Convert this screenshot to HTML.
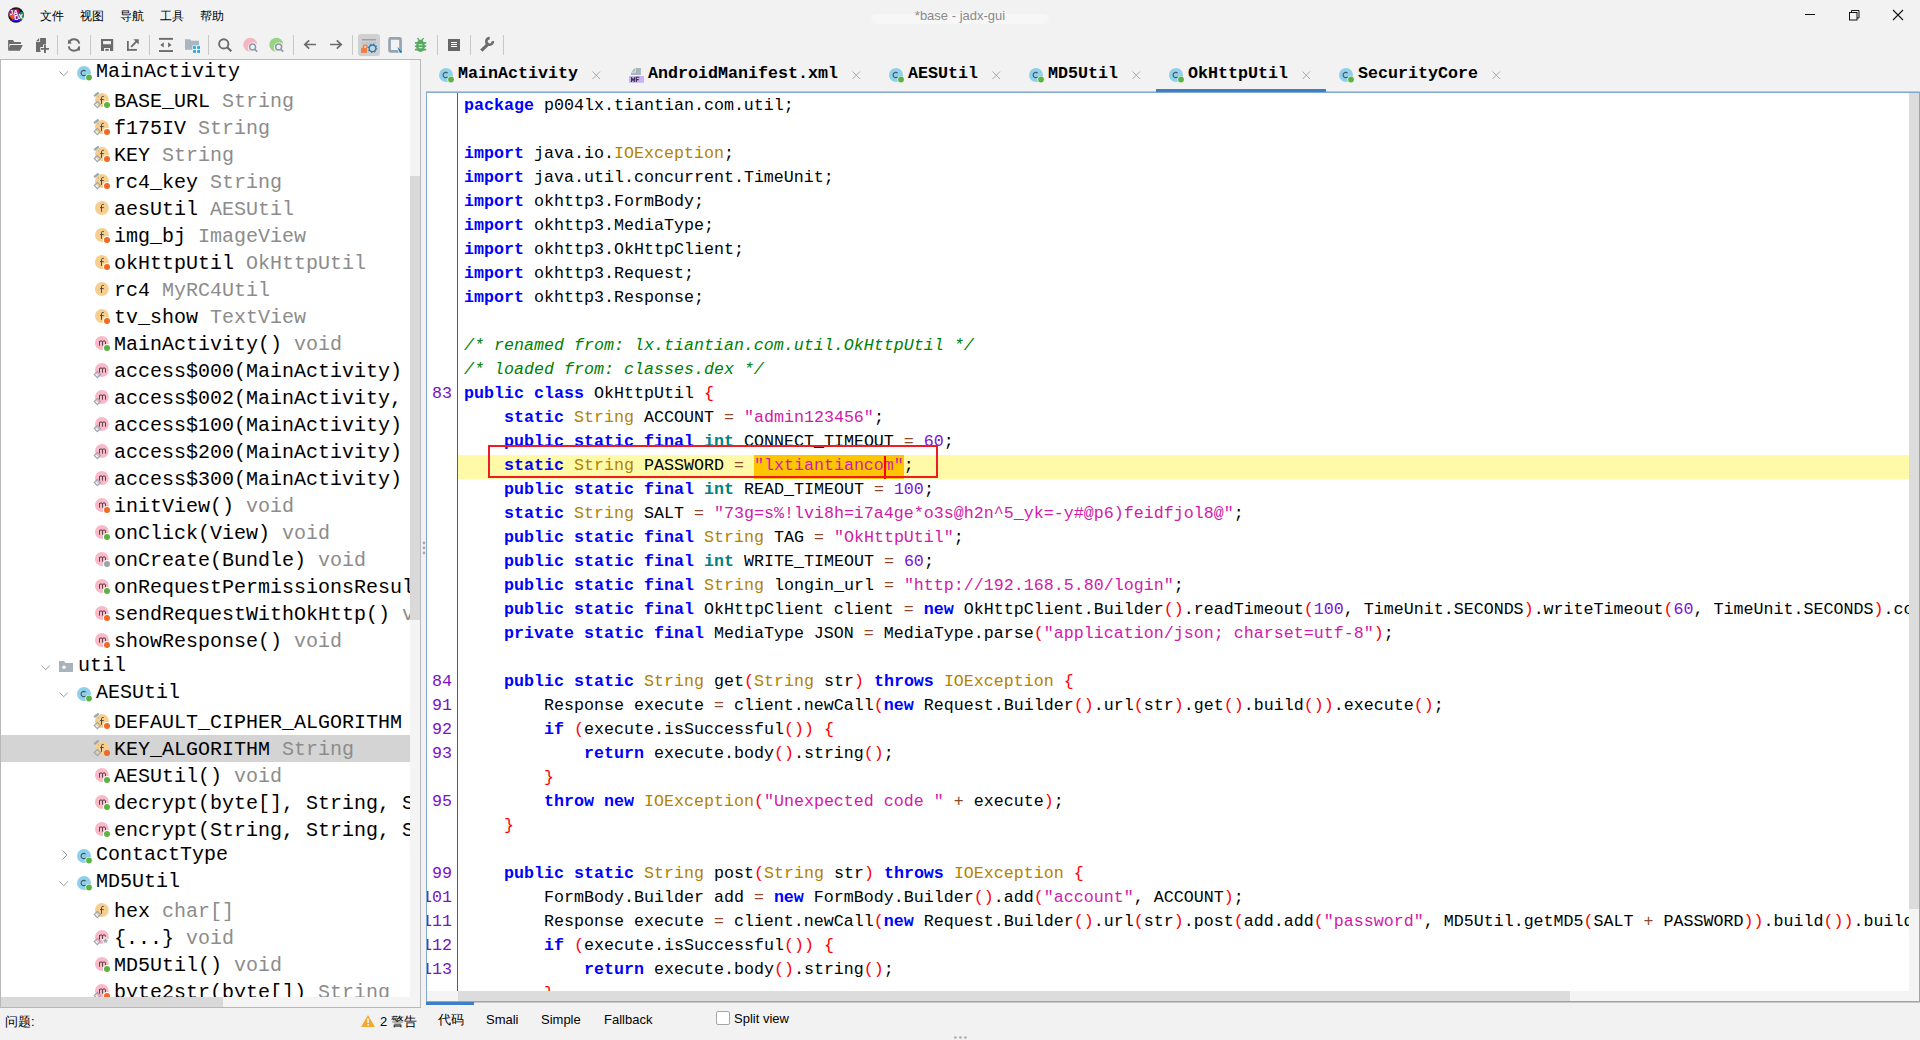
<!DOCTYPE html><html><head><meta charset="utf-8"><title>jadx-gui</title><style>
*{margin:0;padding:0;box-sizing:border-box}
html,body{width:1920px;height:1040px;overflow:hidden;background:#f2f2f2;font-family:"Liberation Sans",sans-serif;position:relative}
.a{position:absolute}
.ic{position:absolute;overflow:visible}
#tree{position:absolute;left:0;top:59px;width:421px;height:949px;border:1px solid #b8b8b8;background:#fff;overflow:hidden}
#treein{position:absolute;left:-1px;top:-60px;width:411px;height:997px;overflow:hidden}
.tt{position:absolute;white-space:pre;font-family:"Liberation Mono",monospace;font-size:20px;line-height:20px;color:#000}
.tg{color:#8c8c8c}
.sel{position:absolute;left:1px;width:410px;height:27px;background:#d4d4d4}
#code{position:absolute;left:426px;top:92px;width:1494px;height:910px;border:1px solid #82a9d2;background:#fff;overflow:hidden}
.cl,.ln{position:absolute;left:464px;white-space:pre;font-family:"Liberation Mono",monospace;font-size:16.664px;line-height:24px;height:24px;color:#000}
.ln{left:392px;color:#7a12c6;text-align:right;width:60px}
.kw{color:#0000ff;font-weight:bold}
.ti{color:#008080;font-weight:bold}
.ty{color:#b38200}
.st{color:#d21aa8}
.nu{color:#7a12d6}
.br{color:#ff0000}
.op{color:#8b4a2b}
.cm{color:#008000;font-style:italic}
.tab{position:absolute;top:64px;font-family:"Liberation Mono",monospace;font-weight:bold;font-size:16.664px;line-height:20px;color:#000;white-space:pre}
.x{position:absolute;top:71px}
.ui{position:absolute;white-space:pre;font-size:13px;line-height:16px;color:#000}
.sep{position:absolute;top:35px;width:1px;height:20px;background:#c8c8c8}
</style></head><body>
<svg class="ic" style="left:8px;top:7px" width="16" height="16" viewBox="0 0 16 16">
<defs><clipPath id="lc"><circle cx="8" cy="8" r="7.85"/></clipPath></defs>
<g clip-path="url(#lc)">
<rect width="16" height="16" fill="#1c1418"/>
<path d="M0.5 2.5 L10.5 1.8 L12 5.2 L10 8 H0.5 Z" fill="#a3126e"/>
<path d="M0.5 8 H11 L5.2 13.6 Z" fill="#f5561c"/>
<path d="M3.2 14 H13.2 L9.6 8.4 Z" fill="#3b10d2"/>
<path d="M10 8.3 L12 5 L16 5.3 V12 L13.2 14 Z" fill="#0e8a7a"/>
</g>
<text x="1.6" y="7.6" font-family="Liberation Sans" font-weight="bold" font-size="6.6" fill="#fff">JA</text>
<text x="6.3" y="13.4" font-family="Liberation Sans" font-weight="bold" font-size="6.6" fill="#fff">D</text>
<text x="10.6" y="12.2" font-family="Liberation Sans" font-weight="bold" font-size="6.6" fill="#fff">X</text>
</svg>
<div class="ui" style="left:40px;top:8px;font-size:12px">文件</div>
<div class="ui" style="left:80px;top:8px;font-size:12px">视图</div>
<div class="ui" style="left:120px;top:8px;font-size:12px">导航</div>
<div class="ui" style="left:160px;top:8px;font-size:12px">工具</div>
<div class="ui" style="left:200px;top:8px;font-size:12px">帮助</div>
<div class="a" style="left:871px;top:14px;width:178px;height:10px;border-radius:5px;background:#f7f7f7"></div>
<div class="ui" style="left:0;width:1920px;text-align:center;top:8px;color:#8a8a8a;font-size:13px">*base - jadx-gui</div>
<svg class="ic" style="left:1800px;top:5px" width="110" height="22" viewBox="0 0 110 22"><path d="M5 9.5 H15" stroke="#111" stroke-width="1"/><rect x="49.5" y="7.5" width="7.5" height="7.5" fill="none" stroke="#111" stroke-width="1"/><path d="M51.5 7.5 V5.5 H59 V13 H57" fill="none" stroke="#111" stroke-width="1"/><path d="M93 5 L103 15 M103 5 L93 15" stroke="#111" stroke-width="1.1"/></svg>
<svg class="ic" style="left:7px;top:39px" width="17" height="13" viewBox="0 0 17 13"><path d="M1.1 1.1 H6.1 L7.1 3 H13.9 V4.9 H2.4 V9.2 L1.1 11.5 Z" fill="#6b6b6b"/><path d="M3.3 6.1 H15.8 L12.9 11.75 H1.1 Z" fill="#6b6b6b"/></svg><svg class="ic" style="left:35px;top:37px" width="16" height="17" viewBox="0 0 16 17"><path d="M1 4.2 L4.2 0.9 V4.2 Z" fill="#6b6b6b"/><path d="M1 5.1 H5.1 V0.9 H11 V8 H8.2 V10.3 H5.6 V15 H1 Z" fill="#6b6b6b"/><path d="M5.4 11.9 H14.5 M9.95 7.6 V16.4" stroke="#f2f2f2" stroke-width="3.6"/><path d="M5.9 11.9 H14 M9.95 8.1 V15.9" stroke="#6b6b6b" stroke-width="1.9"/></svg><div class="sep" style="left:57px"></div><svg class="ic" style="left:67px;top:38px" width="14" height="14" viewBox="0 0 14 14"><path d="M1.7 5.6 A5.4 5.4 0 0 1 12.3 5.6" fill="none" stroke="#6b6b6b" stroke-width="1.9"/><path d="M1.7 8.4 A5.4 5.4 0 0 0 12.3 8.4" fill="none" stroke="#6b6b6b" stroke-width="1.9"/><path d="M1.1 1.5 V5.6 H4.9 Z" fill="#6b6b6b"/><path d="M13 8.4 V12.4 H9.25 Z" fill="#6b6b6b"/></svg><div class="sep" style="left:90px"></div><svg class="ic" style="left:101px;top:39px" width="13" height="13" viewBox="0 0 13 13"><path d="M0 0 H12.2 V11.9 H0 Z M2.1 2.1 V5.3 H10 V2.1 Z M3 8.9 V11.9 H9 V8.9 Z" fill="#6b6b6b" fill-rule="evenodd"/><rect x="4.3" y="9.9" width="3.45" height="1.9" fill="#6b6b6b"/></svg><svg class="ic" style="left:127px;top:39px" width="13" height="13" viewBox="0 0 13 13"><rect x="0" y="2" width="1.75" height="9.8" fill="#6b6b6b"/><rect x="0" y="9.95" width="9.9" height="1.85" fill="#6b6b6b"/><path d="M4.2 7.8 L9.8 2.2" stroke="#6b6b6b" stroke-width="1.9"/><path d="M6.4 0.2 H11.75 V5.5 Z" fill="#6b6b6b"/></svg><div class="sep" style="left:149px"></div><svg class="ic" style="left:159px;top:37px" width="15" height="16" viewBox="0 0 15 16"><rect x="0" y="0.9" width="14" height="1.9" fill="#6b6b6b"/><rect x="0" y="13.1" width="14" height="1.9" fill="#6b6b6b"/><path d="M1.3 8 L4.75 5.3 V10.6 Z M12.6 8 L9.1 5.3 V10.6 Z" fill="#6b6b6b"/></svg><svg class="ic" style="left:185px;top:39px" width="16" height="15" viewBox="0 0 16 15"><path d="M0 0.2 H5 L6.5 1.8 H14 V10.8 H0 Z" fill="#a9b5bf"/><rect x="7.4" y="6.4" width="8.6" height="8.6" fill="#f2f2f2"/><rect x="8.1" y="7.1" width="2.8" height="2.8" fill="#2aa5de"/><rect x="12.2" y="7.1" width="2.8" height="2.8" fill="#2aa5de"/><rect x="8.1" y="11.1" width="2.8" height="2.8" fill="#2aa5de"/><rect x="12.2" y="11.1" width="2.8" height="2.8" fill="#2aa5de"/></svg><div class="sep" style="left:208px"></div><svg class="ic" style="left:218px;top:39px" width="15" height="14" viewBox="0 0 15 14"><circle cx="5.75" cy="4.9" r="4.65" fill="none" stroke="#6b6b6b" stroke-width="1.9"/><path d="M9.1 8.3 L13.3 12.3" stroke="#6b6b6b" stroke-width="2.2"/></svg><svg class="ic" style="left:243px;top:37px" width="16" height="16" viewBox="0 0 16 16"><circle cx="7.3" cy="7.7" r="7" fill="#f7b4c3"/><circle cx="10" cy="10.5" r="5.2" fill="#f2f2f2"/><circle cx="9.6" cy="10" r="3" fill="none" stroke="#8a98a4" stroke-width="1.5"/><path d="M11.7 12.3 L14.3 14.7" stroke="#8a98a4" stroke-width="1.6"/></svg><svg class="ic" style="left:269px;top:37px" width="16" height="16" viewBox="0 0 16 16"><circle cx="7.3" cy="7.7" r="7" fill="#9ad283"/><circle cx="10" cy="10.5" r="5.2" fill="#f2f2f2"/><circle cx="9.6" cy="10" r="3" fill="none" stroke="#8a98a4" stroke-width="1.5"/><path d="M11.7 12.3 L14.3 14.7" stroke="#8a98a4" stroke-width="1.6"/></svg><div class="sep" style="left:293px"></div><svg class="ic" style="left:303px;top:39px" width="14" height="11" viewBox="0 0 14 11"><path d="M13 5.5 H1.8 M6.2 1.3 L1.8 5.5 L6.2 9.7" fill="none" stroke="#6b6b6b" stroke-width="1.7"/></svg><svg class="ic" style="left:329px;top:39px" width="14" height="11" viewBox="0 0 14 11"><path d="M1 5.5 H12.2 M7.8 1.3 L12.2 5.5 L7.8 9.7" fill="none" stroke="#6b6b6b" stroke-width="1.7"/></svg><div class="sep" style="left:352px"></div><div class="a" style="left:358px;top:34px;width:22px;height:22px;border-radius:3px;background:#d0d0d0"></div><svg class="ic" style="left:361px;top:38px" width="17" height="16" viewBox="0 0 17 16"><rect x="1.1" y="1" width="13.8" height="1.5" fill="#97a4ae"/><path d="M1.1 4 H2.6 V5.7 H1.1 Z M4.6 4 H7 V5.7 H4.6 Z M7.6 4 H9 V5.7 H7.6 Z M9.8 4 H11.2 V5.7 H9.8 Z M12 4 H14.9 V5.7 H12 Z" fill="#b9c2c9"/><path d="M2.3 10 V8.8 A1.9 1.9 0 0 1 6.1 8.8 V10" fill="none" stroke="#ee7f42" stroke-width="1.4"/><rect x="0.1" y="9.9" width="5.9" height="5" fill="#ee7f42"/><circle cx="11.5" cy="10.3" r="3.3" fill="none" stroke="#2a7fb5" stroke-width="1.3"/><circle cx="11.5" cy="10.3" r="4.1" fill="none" stroke="#2a7fb5" stroke-width="1.4" stroke-dasharray="1.3 1.92"/></svg><svg class="ic" style="left:388px;top:37px" width="16" height="17" viewBox="0 0 16 17"><rect x="1.55" y="1.45" width="11" height="13" rx="1" fill="none" stroke="#95a4b0" stroke-width="2.7"/><path d="M8.6 9.3 L14.8 14.5 V16.8 H11.2 Z" fill="#f2f2f2"/><path d="M9.3 10 L13.9 13.9 V15.8 H11.8 Z" fill="#1f77b0"/></svg><svg class="ic" style="left:414px;top:37px" width="14" height="16" viewBox="0 0 14 16"><path d="M3.4 1.1 L5.6 3.6 M9.6 1.1 L7.4 3.6" stroke="#58aa60" stroke-width="1.4"/><ellipse cx="6.5" cy="4.4" rx="2.9" ry="1.7" fill="#58aa60"/><ellipse cx="6.5" cy="9.3" rx="4.4" ry="5.6" fill="#58aa60"/><path d="M0.9 5.9 H12.2 M0.9 9.25 H12.2 M0.9 12.6 H12.2" stroke="#58aa60" stroke-width="1.6"/><rect x="4.6" y="7.3" width="3.8" height="1" fill="#e8f0e8"/><rect x="4.6" y="10.2" width="3.8" height="1" fill="#e8f0e8"/></svg><div class="sep" style="left:437px"></div><svg class="ic" style="left:448px;top:39px" width="12" height="12" viewBox="0 0 12 12"><rect width="12" height="12" fill="#666"/><path d="M3 3.5 H9 M3 5.5 H9 M3 7.5 H9" stroke="#fff" stroke-width="1"/></svg><div class="sep" style="left:470px"></div><svg class="ic" style="left:480px;top:37px" width="15" height="16" viewBox="0 0 15 16"><path d="M1.3 13.7 L7.6 7.6" stroke="#6b6b6b" stroke-width="3.2"/><path d="M12.9 4.2 A3.3 3.3 0 1 1 9.7 1.1" fill="none" stroke="#6b6b6b" stroke-width="2.6"/><path d="M6.7 5.6 L8.6 8.4" stroke="#6b6b6b" stroke-width="2.6"/></svg><div class="sep" style="left:503px"></div>
<div id="tree"><div id="treein">
<svg class="ic" style="left:59px;top:71.4px" width="10" height="6" viewBox="0 0 10 6"><path d="M0.5 0.5 L4.7 4.7 L8.9 0.5" fill="none" stroke="#9a9a9a" stroke-width="1"/></svg><svg class="ic" style="left:77px;top:66.2px" width="16" height="16" viewBox="0 0 16 16"><circle cx="7" cy="7" r="7" fill="#8fd0ea"/><path d="M8.6 5.2 A2.6 2.6 0 1 0 8.6 8.8" fill="none" stroke="#4a5560" stroke-width="1.1"/><circle cx="12" cy="11.5" r="3.6" fill="#fff"/><circle cx="12" cy="11.5" r="2.9" fill="#59b441"/></svg><div class="tt" style="left:96px;top:62.3px">MainActivity</div><svg class="ic" style="left:93px;top:91.9px" width="19" height="19" viewBox="0 0 19 19"><circle cx="8.9" cy="8" r="6.9" fill="#f6cf90"/><path d="M8.5 11.85 V5.8 Q8.5 4.4 9.8 4.4 H10.8 M7 7.6 H10.8" fill="none" stroke="#4d4538" stroke-width="0.95"/><path d="M1.8 3.6 L4.9 1.1" stroke="#9aa8b4" stroke-width="2.3" stroke-linecap="round"/><circle cx="5.5" cy="4.85" r="0.6" fill="#9aa8b4"/><path d="M4.4 9.4 L7.5 12.5 L4.4 15.6 L1.3 12.5 Z" fill="none" stroke="#9aa8b4" stroke-width="1.2"/><circle cx="14" cy="13.1" r="4" fill="#fff"/><circle cx="14" cy="13.1" r="3" fill="#59b441"/></svg><div class="tt" style="left:114px;top:92.1px">BASE_URL <span class="tg">String</span></div><svg class="ic" style="left:93px;top:118.9px" width="19" height="19" viewBox="0 0 19 19"><circle cx="8.9" cy="8" r="6.9" fill="#f6cf90"/><path d="M8.5 11.85 V5.8 Q8.5 4.4 9.8 4.4 H10.8 M7 7.6 H10.8" fill="none" stroke="#4d4538" stroke-width="0.95"/><path d="M1.8 3.6 L4.9 1.1" stroke="#9aa8b4" stroke-width="2.3" stroke-linecap="round"/><circle cx="5.5" cy="4.85" r="0.6" fill="#9aa8b4"/><path d="M4.4 9.4 L7.5 12.5 L4.4 15.6 L1.3 12.5 Z" fill="none" stroke="#9aa8b4" stroke-width="1.2"/><circle cx="14" cy="13.1" r="4" fill="#fff"/><circle cx="14" cy="13.1" r="3" fill="#f06a25"/></svg><div class="tt" style="left:114px;top:119.1px">f175IV <span class="tg">String</span></div><svg class="ic" style="left:93px;top:145.9px" width="19" height="19" viewBox="0 0 19 19"><circle cx="8.9" cy="8" r="6.9" fill="#f6cf90"/><path d="M8.5 11.85 V5.8 Q8.5 4.4 9.8 4.4 H10.8 M7 7.6 H10.8" fill="none" stroke="#4d4538" stroke-width="0.95"/><path d="M1.8 3.6 L4.9 1.1" stroke="#9aa8b4" stroke-width="2.3" stroke-linecap="round"/><circle cx="5.5" cy="4.85" r="0.6" fill="#9aa8b4"/><path d="M4.4 9.4 L7.5 12.5 L4.4 15.6 L1.3 12.5 Z" fill="none" stroke="#9aa8b4" stroke-width="1.2"/><circle cx="14" cy="13.1" r="4" fill="#fff"/><circle cx="14" cy="13.1" r="3" fill="#f06a25"/></svg><div class="tt" style="left:114px;top:146.1px">KEY <span class="tg">String</span></div><svg class="ic" style="left:93px;top:172.9px" width="19" height="19" viewBox="0 0 19 19"><circle cx="8.9" cy="8" r="6.9" fill="#f6cf90"/><path d="M8.5 11.85 V5.8 Q8.5 4.4 9.8 4.4 H10.8 M7 7.6 H10.8" fill="none" stroke="#4d4538" stroke-width="0.95"/><path d="M1.8 3.6 L4.9 1.1" stroke="#9aa8b4" stroke-width="2.3" stroke-linecap="round"/><circle cx="5.5" cy="4.85" r="0.6" fill="#9aa8b4"/><path d="M4.4 9.4 L7.5 12.5 L4.4 15.6 L1.3 12.5 Z" fill="none" stroke="#9aa8b4" stroke-width="1.2"/><circle cx="14" cy="13.1" r="4" fill="#fff"/><circle cx="14" cy="13.1" r="3" fill="#f06a25"/></svg><div class="tt" style="left:114px;top:173.1px">rc4_key <span class="tg">String</span></div><svg class="ic" style="left:93px;top:199.9px" width="19" height="19" viewBox="0 0 19 19"><circle cx="8.9" cy="8" r="6.9" fill="#f6cf90"/><path d="M8.5 11.85 V5.8 Q8.5 4.4 9.8 4.4 H10.8 M7 7.6 H10.8" fill="none" stroke="#4d4538" stroke-width="0.95"/></svg><div class="tt" style="left:114px;top:200.1px">aesUtil <span class="tg">AESUtil</span></div><svg class="ic" style="left:93px;top:226.9px" width="19" height="19" viewBox="0 0 19 19"><circle cx="8.9" cy="8" r="6.9" fill="#f6cf90"/><path d="M8.5 11.85 V5.8 Q8.5 4.4 9.8 4.4 H10.8 M7 7.6 H10.8" fill="none" stroke="#4d4538" stroke-width="0.95"/><circle cx="14" cy="13.1" r="4" fill="#fff"/><circle cx="14" cy="13.1" r="3" fill="#f06a25"/></svg><div class="tt" style="left:114px;top:227.1px">img_bj <span class="tg">ImageView</span></div><svg class="ic" style="left:93px;top:253.9px" width="19" height="19" viewBox="0 0 19 19"><circle cx="8.9" cy="8" r="6.9" fill="#f6cf90"/><path d="M8.5 11.85 V5.8 Q8.5 4.4 9.8 4.4 H10.8 M7 7.6 H10.8" fill="none" stroke="#4d4538" stroke-width="0.95"/><circle cx="14" cy="13.1" r="4" fill="#fff"/><circle cx="14" cy="13.1" r="3" fill="#f06a25"/></svg><div class="tt" style="left:114px;top:254.1px">okHttpUtil <span class="tg">OkHttpUtil</span></div><svg class="ic" style="left:93px;top:280.9px" width="19" height="19" viewBox="0 0 19 19"><circle cx="8.9" cy="8" r="6.9" fill="#f6cf90"/><path d="M8.5 11.85 V5.8 Q8.5 4.4 9.8 4.4 H10.8 M7 7.6 H10.8" fill="none" stroke="#4d4538" stroke-width="0.95"/></svg><div class="tt" style="left:114px;top:281.1px">rc4 <span class="tg">MyRC4Util</span></div><svg class="ic" style="left:93px;top:307.9px" width="19" height="19" viewBox="0 0 19 19"><circle cx="8.9" cy="8" r="6.9" fill="#f6cf90"/><path d="M8.5 11.85 V5.8 Q8.5 4.4 9.8 4.4 H10.8 M7 7.6 H10.8" fill="none" stroke="#4d4538" stroke-width="0.95"/><circle cx="14" cy="13.1" r="4" fill="#fff"/><circle cx="14" cy="13.1" r="3" fill="#f06a25"/></svg><div class="tt" style="left:114px;top:308.1px">tv_show <span class="tg">TextView</span></div><svg class="ic" style="left:93px;top:334.9px" width="19" height="19" viewBox="0 0 19 19"><circle cx="8.9" cy="8" r="6.9" fill="#f9b9c9"/><path d="M6.5 10.7 V6.2 M6.5 7 Q6.5 5.9 8 5.9 Q9.5 5.9 9.5 7 V10.7 M9.5 7 Q9.5 5.9 11 5.9 Q12.5 5.9 12.5 7 V10.7" fill="none" stroke="#4d3d40" stroke-width="0.95"/><circle cx="14" cy="13.1" r="4" fill="#fff"/><circle cx="14" cy="13.1" r="3" fill="#59b441"/></svg><div class="tt" style="left:114px;top:335.1px">MainActivity() <span class="tg">void</span></div><svg class="ic" style="left:93px;top:361.9px" width="19" height="19" viewBox="0 0 19 19"><circle cx="8.9" cy="8" r="6.9" fill="#f9b9c9"/><path d="M6.5 10.7 V6.2 M6.5 7 Q6.5 5.9 8 5.9 Q9.5 5.9 9.5 7 V10.7 M9.5 7 Q9.5 5.9 11 5.9 Q12.5 5.9 12.5 7 V10.7" fill="none" stroke="#4d3d40" stroke-width="0.95"/><path d="M4.4 9.4 L7.5 12.5 L4.4 15.6 L1.3 12.5 Z" fill="none" stroke="#9aa8b4" stroke-width="1.2"/></svg><div class="tt" style="left:114px;top:362.1px">access$000(MainActivity)</div><svg class="ic" style="left:93px;top:388.9px" width="19" height="19" viewBox="0 0 19 19"><circle cx="8.9" cy="8" r="6.9" fill="#f9b9c9"/><path d="M6.5 10.7 V6.2 M6.5 7 Q6.5 5.9 8 5.9 Q9.5 5.9 9.5 7 V10.7 M9.5 7 Q9.5 5.9 11 5.9 Q12.5 5.9 12.5 7 V10.7" fill="none" stroke="#4d3d40" stroke-width="0.95"/><path d="M4.4 9.4 L7.5 12.5 L4.4 15.6 L1.3 12.5 Z" fill="none" stroke="#9aa8b4" stroke-width="1.2"/></svg><div class="tt" style="left:114px;top:389.1px">access$002(MainActivity, String)</div><svg class="ic" style="left:93px;top:415.9px" width="19" height="19" viewBox="0 0 19 19"><circle cx="8.9" cy="8" r="6.9" fill="#f9b9c9"/><path d="M6.5 10.7 V6.2 M6.5 7 Q6.5 5.9 8 5.9 Q9.5 5.9 9.5 7 V10.7 M9.5 7 Q9.5 5.9 11 5.9 Q12.5 5.9 12.5 7 V10.7" fill="none" stroke="#4d3d40" stroke-width="0.95"/><path d="M4.4 9.4 L7.5 12.5 L4.4 15.6 L1.3 12.5 Z" fill="none" stroke="#9aa8b4" stroke-width="1.2"/></svg><div class="tt" style="left:114px;top:416.1px">access$100(MainActivity)</div><svg class="ic" style="left:93px;top:442.9px" width="19" height="19" viewBox="0 0 19 19"><circle cx="8.9" cy="8" r="6.9" fill="#f9b9c9"/><path d="M6.5 10.7 V6.2 M6.5 7 Q6.5 5.9 8 5.9 Q9.5 5.9 9.5 7 V10.7 M9.5 7 Q9.5 5.9 11 5.9 Q12.5 5.9 12.5 7 V10.7" fill="none" stroke="#4d3d40" stroke-width="0.95"/><path d="M4.4 9.4 L7.5 12.5 L4.4 15.6 L1.3 12.5 Z" fill="none" stroke="#9aa8b4" stroke-width="1.2"/></svg><div class="tt" style="left:114px;top:443.1px">access$200(MainActivity)</div><svg class="ic" style="left:93px;top:469.9px" width="19" height="19" viewBox="0 0 19 19"><circle cx="8.9" cy="8" r="6.9" fill="#f9b9c9"/><path d="M6.5 10.7 V6.2 M6.5 7 Q6.5 5.9 8 5.9 Q9.5 5.9 9.5 7 V10.7 M9.5 7 Q9.5 5.9 11 5.9 Q12.5 5.9 12.5 7 V10.7" fill="none" stroke="#4d3d40" stroke-width="0.95"/><path d="M4.4 9.4 L7.5 12.5 L4.4 15.6 L1.3 12.5 Z" fill="none" stroke="#9aa8b4" stroke-width="1.2"/></svg><div class="tt" style="left:114px;top:470.1px">access$300(MainActivity)</div><svg class="ic" style="left:93px;top:496.9px" width="19" height="19" viewBox="0 0 19 19"><circle cx="8.9" cy="8" r="6.9" fill="#f9b9c9"/><path d="M6.5 10.7 V6.2 M6.5 7 Q6.5 5.9 8 5.9 Q9.5 5.9 9.5 7 V10.7 M9.5 7 Q9.5 5.9 11 5.9 Q12.5 5.9 12.5 7 V10.7" fill="none" stroke="#4d3d40" stroke-width="0.95"/><circle cx="14" cy="13.1" r="4" fill="#fff"/><circle cx="14" cy="13.1" r="3" fill="#f06a25"/></svg><div class="tt" style="left:114px;top:497.1px">initView() <span class="tg">void</span></div><svg class="ic" style="left:93px;top:523.9px" width="19" height="19" viewBox="0 0 19 19"><circle cx="8.9" cy="8" r="6.9" fill="#f9b9c9"/><path d="M6.5 10.7 V6.2 M6.5 7 Q6.5 5.9 8 5.9 Q9.5 5.9 9.5 7 V10.7 M9.5 7 Q9.5 5.9 11 5.9 Q12.5 5.9 12.5 7 V10.7" fill="none" stroke="#4d3d40" stroke-width="0.95"/><circle cx="14" cy="13.1" r="4" fill="#fff"/><circle cx="14" cy="13.1" r="3" fill="#59b441"/></svg><div class="tt" style="left:114px;top:524.1px">onClick(View) <span class="tg">void</span></div><svg class="ic" style="left:93px;top:550.9px" width="19" height="19" viewBox="0 0 19 19"><circle cx="8.9" cy="8" r="6.9" fill="#f9b9c9"/><path d="M6.5 10.7 V6.2 M6.5 7 Q6.5 5.9 8 5.9 Q9.5 5.9 9.5 7 V10.7 M9.5 7 Q9.5 5.9 11 5.9 Q12.5 5.9 12.5 7 V10.7" fill="none" stroke="#4d3d40" stroke-width="0.95"/><circle cx="14" cy="13.1" r="4" fill="#fff"/><circle cx="14" cy="13.1" r="3" fill="#9aa4ac"/></svg><div class="tt" style="left:114px;top:551.1px">onCreate(Bundle) <span class="tg">void</span></div><svg class="ic" style="left:93px;top:577.9px" width="19" height="19" viewBox="0 0 19 19"><circle cx="8.9" cy="8" r="6.9" fill="#f9b9c9"/><path d="M6.5 10.7 V6.2 M6.5 7 Q6.5 5.9 8 5.9 Q9.5 5.9 9.5 7 V10.7 M9.5 7 Q9.5 5.9 11 5.9 Q12.5 5.9 12.5 7 V10.7" fill="none" stroke="#4d3d40" stroke-width="0.95"/><circle cx="14" cy="13.1" r="4" fill="#fff"/><circle cx="14" cy="13.1" r="3" fill="#59b441"/></svg><div class="tt" style="left:114px;top:578.1px">onRequestPermissionsResult(int, String[], int[]) <span class="tg">void</span></div><svg class="ic" style="left:93px;top:604.9px" width="19" height="19" viewBox="0 0 19 19"><circle cx="8.9" cy="8" r="6.9" fill="#f9b9c9"/><path d="M6.5 10.7 V6.2 M6.5 7 Q6.5 5.9 8 5.9 Q9.5 5.9 9.5 7 V10.7 M9.5 7 Q9.5 5.9 11 5.9 Q12.5 5.9 12.5 7 V10.7" fill="none" stroke="#4d3d40" stroke-width="0.95"/><circle cx="14" cy="13.1" r="4" fill="#fff"/><circle cx="14" cy="13.1" r="3" fill="#f06a25"/></svg><div class="tt" style="left:114px;top:605.1px">sendRequestWithOkHttp() <span class="tg">void</span></div><svg class="ic" style="left:93px;top:631.9px" width="19" height="19" viewBox="0 0 19 19"><circle cx="8.9" cy="8" r="6.9" fill="#f9b9c9"/><path d="M6.5 10.7 V6.2 M6.5 7 Q6.5 5.9 8 5.9 Q9.5 5.9 9.5 7 V10.7 M9.5 7 Q9.5 5.9 11 5.9 Q12.5 5.9 12.5 7 V10.7" fill="none" stroke="#4d3d40" stroke-width="0.95"/><circle cx="14" cy="13.1" r="4" fill="#fff"/><circle cx="14" cy="13.1" r="3" fill="#f06a25"/></svg><div class="tt" style="left:114px;top:632.1px">showResponse() <span class="tg">void</span></div><svg class="ic" style="left:41px;top:665.2px" width="10" height="6" viewBox="0 0 10 6"><path d="M0.5 0.5 L4.7 4.7 L8.9 0.5" fill="none" stroke="#9a9a9a" stroke-width="1"/></svg><svg class="ic" style="left:59px;top:661.2px" width="14" height="11" viewBox="0 0 14 11"><path d="M0 0 H5 L6.5 2 H14 V11 H0 Z" fill="#a9b3bb"/><circle cx="5" cy="6.3" r="1.8" fill="#fff"/></svg><div class="tt" style="left:78px;top:656.1px">util</div><svg class="ic" style="left:59px;top:692.2px" width="10" height="6" viewBox="0 0 10 6"><path d="M0.5 0.5 L4.7 4.7 L8.9 0.5" fill="none" stroke="#9a9a9a" stroke-width="1"/></svg><svg class="ic" style="left:77px;top:687px" width="16" height="16" viewBox="0 0 16 16"><circle cx="7" cy="7" r="7" fill="#8fd0ea"/><path d="M8.6 5.2 A2.6 2.6 0 1 0 8.6 8.8" fill="none" stroke="#4a5560" stroke-width="1.1"/><circle cx="12" cy="11.5" r="3.6" fill="#fff"/><circle cx="12" cy="11.5" r="2.9" fill="#59b441"/></svg><div class="tt" style="left:96px;top:683.1px">AESUtil</div><svg class="ic" style="left:93px;top:712.7px" width="19" height="19" viewBox="0 0 19 19"><circle cx="8.9" cy="8" r="6.9" fill="#f6cf90"/><path d="M8.5 11.85 V5.8 Q8.5 4.4 9.8 4.4 H10.8 M7 7.6 H10.8" fill="none" stroke="#4d4538" stroke-width="0.95"/><path d="M1.8 3.6 L4.9 1.1" stroke="#9aa8b4" stroke-width="2.3" stroke-linecap="round"/><circle cx="5.5" cy="4.85" r="0.6" fill="#9aa8b4"/><path d="M4.4 9.4 L7.5 12.5 L4.4 15.6 L1.3 12.5 Z" fill="none" stroke="#9aa8b4" stroke-width="1.2"/><circle cx="14" cy="13.1" r="4" fill="#fff"/><circle cx="14" cy="13.1" r="3" fill="#f06a25"/></svg><div class="tt" style="left:114px;top:712.9px">DEFAULT_CIPHER_ALGORITHM <span class="tg">String</span></div><div class="sel" style="top:735px"></div><svg class="ic" style="left:93px;top:739.7px" width="19" height="19" viewBox="0 0 19 19"><circle cx="8.9" cy="8" r="6.9" fill="#f6cf90"/><path d="M8.5 11.85 V5.8 Q8.5 4.4 9.8 4.4 H10.8 M7 7.6 H10.8" fill="none" stroke="#4d4538" stroke-width="0.95"/><path d="M1.8 3.6 L4.9 1.1" stroke="#9aa8b4" stroke-width="2.3" stroke-linecap="round"/><circle cx="5.5" cy="4.85" r="0.6" fill="#9aa8b4"/><path d="M4.4 9.4 L7.5 12.5 L4.4 15.6 L1.3 12.5 Z" fill="none" stroke="#9aa8b4" stroke-width="1.2"/><circle cx="14" cy="13.1" r="4" fill="#d4d4d4"/><circle cx="14" cy="13.1" r="3" fill="#f06a25"/></svg><div class="tt" style="left:114px;top:739.9px">KEY_ALGORITHM <span class="tg">String</span></div><svg class="ic" style="left:93px;top:766.7px" width="19" height="19" viewBox="0 0 19 19"><circle cx="8.9" cy="8" r="6.9" fill="#f9b9c9"/><path d="M6.5 10.7 V6.2 M6.5 7 Q6.5 5.9 8 5.9 Q9.5 5.9 9.5 7 V10.7 M9.5 7 Q9.5 5.9 11 5.9 Q12.5 5.9 12.5 7 V10.7" fill="none" stroke="#4d3d40" stroke-width="0.95"/><circle cx="14" cy="13.1" r="4" fill="#fff"/><circle cx="14" cy="13.1" r="3" fill="#59b441"/></svg><div class="tt" style="left:114px;top:766.9px">AESUtil() <span class="tg">void</span></div><svg class="ic" style="left:93px;top:793.7px" width="19" height="19" viewBox="0 0 19 19"><circle cx="8.9" cy="8" r="6.9" fill="#f9b9c9"/><path d="M6.5 10.7 V6.2 M6.5 7 Q6.5 5.9 8 5.9 Q9.5 5.9 9.5 7 V10.7 M9.5 7 Q9.5 5.9 11 5.9 Q12.5 5.9 12.5 7 V10.7" fill="none" stroke="#4d3d40" stroke-width="0.95"/><circle cx="14" cy="13.1" r="4" fill="#fff"/><circle cx="14" cy="13.1" r="3" fill="#59b441"/></svg><div class="tt" style="left:114px;top:793.9px">decrypt(byte[], String, String) <span class="tg">byte[]</span></div><svg class="ic" style="left:93px;top:820.7px" width="19" height="19" viewBox="0 0 19 19"><circle cx="8.9" cy="8" r="6.9" fill="#f9b9c9"/><path d="M6.5 10.7 V6.2 M6.5 7 Q6.5 5.9 8 5.9 Q9.5 5.9 9.5 7 V10.7 M9.5 7 Q9.5 5.9 11 5.9 Q12.5 5.9 12.5 7 V10.7" fill="none" stroke="#4d3d40" stroke-width="0.95"/><circle cx="14" cy="13.1" r="4" fill="#fff"/><circle cx="14" cy="13.1" r="3" fill="#59b441"/></svg><div class="tt" style="left:114px;top:820.9px">encrypt(String, String, String) <span class="tg">byte[]</span></div><svg class="ic" style="left:62px;top:849.5px" width="6" height="10" viewBox="0 0 6 10"><path d="M0.5 0.5 L5 5 L0.5 9.5" fill="none" stroke="#9a9a9a" stroke-width="1"/></svg><svg class="ic" style="left:77px;top:848.8px" width="16" height="16" viewBox="0 0 16 16"><circle cx="7" cy="7" r="7" fill="#8fd0ea"/><path d="M8.6 5.2 A2.6 2.6 0 1 0 8.6 8.8" fill="none" stroke="#4a5560" stroke-width="1.1"/><circle cx="12" cy="11.5" r="3.6" fill="#fff"/><circle cx="12" cy="11.5" r="2.9" fill="#59b441"/></svg><div class="tt" style="left:96px;top:844.9px">ContactType</div><svg class="ic" style="left:59px;top:881px" width="10" height="6" viewBox="0 0 10 6"><path d="M0.5 0.5 L4.7 4.7 L8.9 0.5" fill="none" stroke="#9a9a9a" stroke-width="1"/></svg><svg class="ic" style="left:77px;top:875.8px" width="16" height="16" viewBox="0 0 16 16"><circle cx="7" cy="7" r="7" fill="#8fd0ea"/><path d="M8.6 5.2 A2.6 2.6 0 1 0 8.6 8.8" fill="none" stroke="#4a5560" stroke-width="1.1"/><circle cx="12" cy="11.5" r="3.6" fill="#fff"/><circle cx="12" cy="11.5" r="2.9" fill="#59b441"/></svg><div class="tt" style="left:96px;top:871.9px">MD5Util</div><svg class="ic" style="left:93px;top:901.7px" width="19" height="19" viewBox="0 0 19 19"><circle cx="8.9" cy="8" r="6.9" fill="#f6cf90"/><path d="M8.5 11.85 V5.8 Q8.5 4.4 9.8 4.4 H10.8 M7 7.6 H10.8" fill="none" stroke="#4d4538" stroke-width="0.95"/><path d="M4.4 9.4 L7.5 12.5 L4.4 15.6 L1.3 12.5 Z" fill="none" stroke="#9aa8b4" stroke-width="1.2"/></svg><div class="tt" style="left:114px;top:901.9px">hex <span class="tg">char[]</span></div><svg class="ic" style="left:93px;top:928.7px" width="19" height="19" viewBox="0 0 19 19"><circle cx="8.9" cy="8" r="6.9" fill="#f9b9c9"/><path d="M6.5 10.7 V6.2 M6.5 7 Q6.5 5.9 8 5.9 Q9.5 5.9 9.5 7 V10.7 M9.5 7 Q9.5 5.9 11 5.9 Q12.5 5.9 12.5 7 V10.7" fill="none" stroke="#4d3d40" stroke-width="0.95"/><path d="M4.4 9.4 L7.5 12.5 L4.4 15.6 L1.3 12.5 Z" fill="none" stroke="#9aa8b4" stroke-width="1.2"/><path d="M12.50 7.80 L13.50 10.32 L16.21 10.49 L14.12 12.23 L14.79 14.86 L12.50 13.40 L10.21 14.86 L10.88 12.23 L8.79 10.49 L11.50 10.32 Z" fill="#9aa8b4" stroke="#fff" stroke-width="0.8"/></svg><div class="tt" style="left:114px;top:928.9px">{...} <span class="tg">void</span></div><svg class="ic" style="left:93px;top:955.7px" width="19" height="19" viewBox="0 0 19 19"><circle cx="8.9" cy="8" r="6.9" fill="#f9b9c9"/><path d="M6.5 10.7 V6.2 M6.5 7 Q6.5 5.9 8 5.9 Q9.5 5.9 9.5 7 V10.7 M9.5 7 Q9.5 5.9 11 5.9 Q12.5 5.9 12.5 7 V10.7" fill="none" stroke="#4d3d40" stroke-width="0.95"/><circle cx="14" cy="13.1" r="4" fill="#fff"/><circle cx="14" cy="13.1" r="3" fill="#59b441"/></svg><div class="tt" style="left:114px;top:955.9px">MD5Util() <span class="tg">void</span></div><svg class="ic" style="left:93px;top:982.7px" width="19" height="19" viewBox="0 0 19 19"><circle cx="8.9" cy="8" r="6.9" fill="#f9b9c9"/><path d="M6.5 10.7 V6.2 M6.5 7 Q6.5 5.9 8 5.9 Q9.5 5.9 9.5 7 V10.7 M9.5 7 Q9.5 5.9 11 5.9 Q12.5 5.9 12.5 7 V10.7" fill="none" stroke="#4d3d40" stroke-width="0.95"/><path d="M4.4 9.4 L7.5 12.5 L4.4 15.6 L1.3 12.5 Z" fill="none" stroke="#9aa8b4" stroke-width="1.2"/><circle cx="14" cy="13.1" r="4" fill="#fff"/><circle cx="14" cy="13.1" r="3" fill="#f06a25"/></svg><div class="tt" style="left:114px;top:982.9px">byte2str(byte[]) <span class="tg">String</span></div>
</div>
<div class="a" style="left:409px;top:0;width:10px;height:938px;background:#f4f4f4"></div>
<div class="a" style="left:409px;top:116px;width:10px;height:444px;background:#d9d9d9"></div>
<div class="a" style="left:0;top:937px;width:419px;height:10px;background:#f4f4f4"></div>
<div class="a" style="left:0;top:937px;width:222px;height:10px;background:#d9d9d9"></div>
</div>
<svg class="ic" style="left:421.5px;top:540.5px" width="4" height="14" viewBox="0 0 4 14"><circle cx="2" cy="2" r="1.4" fill="#ababab"/><circle cx="2" cy="7" r="1.4" fill="#ababab"/><circle cx="2" cy="12" r="1.4" fill="#ababab"/></svg>
<svg class="ic" style="left:439px;top:68px" width="16" height="16" viewBox="0 0 16 16"><circle cx="7" cy="7" r="7" fill="#8fd0ea"/><path d="M8.6 5.2 A2.6 2.6 0 1 0 8.6 8.8" fill="none" stroke="#4a5560" stroke-width="1.1"/><circle cx="12" cy="11.5" r="3.6" fill="#f2f2f2"/><circle cx="12" cy="11.5" r="2.9" fill="#59b441"/></svg>
<div class="tab" style="left:458px">MainActivity</div>
<svg class="ic" style="left:592px;top:71px" width="9" height="9" viewBox="0 0 9 9"><path d="M0.5 0.5 L8 8 M8 0.5 L0.5 8" stroke="#a8a8a8" stroke-width="1"/></svg>
<svg class="ic" style="left:629px;top:68px" width="16" height="15" viewBox="0 0 16 15"><path d="M2 4.5 H6.6 V0 H11.9 V6.9 H2 Z M2.5 3.7 L5.9 0 V3.7 Z" fill="#a9b4bc"/><rect x="0" y="8" width="15" height="6.8" fill="#c8b4f5"/><path d="M2.5 14 V9.3 L4.1 12.8 L5.7 9.3 V14 M7.4 14 V9.3 H10.3 M7.4 11.6 H9.8" fill="none" stroke="#3d3540" stroke-width="1.05"/></svg>
<div class="tab" style="left:648px">AndroidManifest.xml</div>
<svg class="ic" style="left:852px;top:71px" width="9" height="9" viewBox="0 0 9 9"><path d="M0.5 0.5 L8 8 M8 0.5 L0.5 8" stroke="#a8a8a8" stroke-width="1"/></svg>
<svg class="ic" style="left:889px;top:68px" width="16" height="16" viewBox="0 0 16 16"><circle cx="7" cy="7" r="7" fill="#8fd0ea"/><path d="M8.6 5.2 A2.6 2.6 0 1 0 8.6 8.8" fill="none" stroke="#4a5560" stroke-width="1.1"/><circle cx="12" cy="11.5" r="3.6" fill="#f2f2f2"/><circle cx="12" cy="11.5" r="2.9" fill="#59b441"/></svg>
<div class="tab" style="left:908px">AESUtil</div>
<svg class="ic" style="left:992px;top:71px" width="9" height="9" viewBox="0 0 9 9"><path d="M0.5 0.5 L8 8 M8 0.5 L0.5 8" stroke="#a8a8a8" stroke-width="1"/></svg>
<svg class="ic" style="left:1029px;top:68px" width="16" height="16" viewBox="0 0 16 16"><circle cx="7" cy="7" r="7" fill="#8fd0ea"/><path d="M8.6 5.2 A2.6 2.6 0 1 0 8.6 8.8" fill="none" stroke="#4a5560" stroke-width="1.1"/><circle cx="12" cy="11.5" r="3.6" fill="#f2f2f2"/><circle cx="12" cy="11.5" r="2.9" fill="#59b441"/></svg>
<div class="tab" style="left:1048px">MD5Util</div>
<svg class="ic" style="left:1132px;top:71px" width="9" height="9" viewBox="0 0 9 9"><path d="M0.5 0.5 L8 8 M8 0.5 L0.5 8" stroke="#a8a8a8" stroke-width="1"/></svg>
<svg class="ic" style="left:1169px;top:68px" width="16" height="16" viewBox="0 0 16 16"><circle cx="7" cy="7" r="7" fill="#8fd0ea"/><path d="M8.6 5.2 A2.6 2.6 0 1 0 8.6 8.8" fill="none" stroke="#4a5560" stroke-width="1.1"/><circle cx="12" cy="11.5" r="3.6" fill="#f2f2f2"/><circle cx="12" cy="11.5" r="2.9" fill="#59b441"/></svg>
<div class="tab" style="left:1188px">OkHttpUtil</div>
<svg class="ic" style="left:1302px;top:71px" width="9" height="9" viewBox="0 0 9 9"><path d="M0.5 0.5 L8 8 M8 0.5 L0.5 8" stroke="#a8a8a8" stroke-width="1"/></svg>
<svg class="ic" style="left:1339px;top:68px" width="16" height="16" viewBox="0 0 16 16"><circle cx="7" cy="7" r="7" fill="#8fd0ea"/><path d="M8.6 5.2 A2.6 2.6 0 1 0 8.6 8.8" fill="none" stroke="#4a5560" stroke-width="1.1"/><circle cx="12" cy="11.5" r="3.6" fill="#f2f2f2"/><circle cx="12" cy="11.5" r="2.9" fill="#59b441"/></svg>
<div class="tab" style="left:1358px">SecurityCore</div>
<svg class="ic" style="left:1492px;top:71px" width="9" height="9" viewBox="0 0 9 9"><path d="M0.5 0.5 L8 8 M8 0.5 L0.5 8" stroke="#a8a8a8" stroke-width="1"/></svg>
<div class="a" style="left:426px;top:91px;width:1494px;height:1px;background:#c6c6c6"></div>
<div class="a" style="left:1156px;top:89px;width:170px;height:3px;background:#3b7fc4"></div>
<div id="code">
<div class="a" style="left:31px;top:362px;width:1462px;height:24px;background:#fffaa8"></div>
<div class="a" style="left:327px;top:362px;width:150px;height:24px;background:#ffc600"></div>
<div class="a" style="left:30px;top:0;width:1px;height:898px;background:#1d8a1d"></div>
<div style="position:absolute;left:-427px;top:-93px;width:1920px;height:1040px">
<div class="cl" style="top:94px"><b class="kw">package</b> p004lx.tiantian.com.util;</div><div class="cl" style="top:142px"><b class="kw">import</b> java.io.<span class="ty">IOException</span>;</div><div class="cl" style="top:166px"><b class="kw">import</b> java.util.concurrent.TimeUnit;</div><div class="cl" style="top:190px"><b class="kw">import</b> okhttp3.FormBody;</div><div class="cl" style="top:214px"><b class="kw">import</b> okhttp3.MediaType;</div><div class="cl" style="top:238px"><b class="kw">import</b> okhttp3.OkHttpClient;</div><div class="cl" style="top:262px"><b class="kw">import</b> okhttp3.Request;</div><div class="cl" style="top:286px"><b class="kw">import</b> okhttp3.Response;</div><div class="cl" style="top:334px"><i class="cm">/* renamed from: lx.tiantian.com.util.OkHttpUtil */</i></div><div class="cl" style="top:358px"><i class="cm">/* loaded from: classes.dex */</i></div><div class="ln" style="top:382px">83</div><div class="cl" style="top:382px"><b class="kw">public</b> <b class="kw">class</b> OkHttpUtil <span class="br">{</span></div><div class="cl" style="top:406px">    <b class="kw">static</b> <span class="ty">String</span> ACCOUNT <span class="op">=</span> <span class="st">&quot;admin123456&quot;</span>;</div><div class="cl" style="top:430px">    <b class="kw">public</b> <b class="kw">static</b> <b class="kw">final</b> <b class="ti">int</b> CONNECT_TIMEOUT <span class="op">=</span> <span class="nu">60</span>;</div><div class="cl" style="top:454px">    <b class="kw">static</b> <span class="ty">String</span> PASSWORD <span class="op">=</span> <span class="st">&quot;lxtiantiancom&quot;</span>;</div><div class="cl" style="top:478px">    <b class="kw">public</b> <b class="kw">static</b> <b class="kw">final</b> <b class="ti">int</b> READ_TIMEOUT <span class="op">=</span> <span class="nu">100</span>;</div><div class="cl" style="top:502px">    <b class="kw">static</b> <span class="ty">String</span> SALT <span class="op">=</span> <span class="st">&quot;73g=s%!lvi8h=i7a4ge*o3s@h2n^5_yk=-y#@p6)feidfjol8@&quot;</span>;</div><div class="cl" style="top:526px">    <b class="kw">public</b> <b class="kw">static</b> <b class="kw">final</b> <span class="ty">String</span> TAG <span class="op">=</span> <span class="st">&quot;OkHttpUtil&quot;</span>;</div><div class="cl" style="top:550px">    <b class="kw">public</b> <b class="kw">static</b> <b class="kw">final</b> <b class="ti">int</b> WRITE_TIMEOUT <span class="op">=</span> <span class="nu">60</span>;</div><div class="cl" style="top:574px">    <b class="kw">public</b> <b class="kw">static</b> <b class="kw">final</b> <span class="ty">String</span> longin_url <span class="op">=</span> <span class="st">&quot;http://192.168.5.80/login&quot;</span>;</div><div class="cl" style="top:598px">    <b class="kw">public</b> <b class="kw">static</b> <b class="kw">final</b> OkHttpClient client <span class="op">=</span> <b class="kw">new</b> OkHttpClient.Builder<span class="br">(</span><span class="br">)</span>.readTimeout<span class="br">(</span><span class="nu">100</span>, TimeUnit.SECONDS<span class="br">)</span>.writeTimeout<span class="br">(</span><span class="nu">60</span>, TimeUnit.SECONDS<span class="br">)</span>.connectTimeout<span class="br">(</span><span class="nu">60</span>, TimeUnit.SECONDS<span class="br">)</span>.build<span class="br">(</span><span class="br">)</span>;</div><div class="cl" style="top:622px">    <b class="kw">private</b> <b class="kw">static</b> <b class="kw">final</b> MediaType JSON <span class="op">=</span> MediaType.parse<span class="br">(</span><span class="st">&quot;application/json; charset=utf-8&quot;</span><span class="br">)</span>;</div><div class="ln" style="top:670px">84</div><div class="cl" style="top:670px">    <b class="kw">public</b> <b class="kw">static</b> <span class="ty">String</span> get<span class="br">(</span><span class="ty">String</span> str<span class="br">)</span> <b class="kw">throws</b> <span class="ty">IOException</span> <span class="br">{</span></div><div class="ln" style="top:694px">91</div><div class="cl" style="top:694px">        Response execute <span class="op">=</span> client.newCall<span class="br">(</span><b class="kw">new</b> Request.Builder<span class="br">(</span><span class="br">)</span>.url<span class="br">(</span>str<span class="br">)</span>.get<span class="br">(</span><span class="br">)</span>.build<span class="br">(</span><span class="br">)</span><span class="br">)</span>.execute<span class="br">(</span><span class="br">)</span>;</div><div class="ln" style="top:718px">92</div><div class="cl" style="top:718px">        <b class="kw">if</b> <span class="br">(</span>execute.isSuccessful<span class="br">(</span><span class="br">)</span><span class="br">)</span> <span class="br">{</span></div><div class="ln" style="top:742px">93</div><div class="cl" style="top:742px">            <b class="kw">return</b> execute.body<span class="br">(</span><span class="br">)</span>.string<span class="br">(</span><span class="br">)</span>;</div><div class="cl" style="top:766px">        <span class="br">}</span></div><div class="ln" style="top:790px">95</div><div class="cl" style="top:790px">        <b class="kw">throw</b> <b class="kw">new</b> <span class="ty">IOException</span><span class="br">(</span><span class="st">&quot;Unexpected code &quot;</span> <span class="op">+</span> execute<span class="br">)</span>;</div><div class="cl" style="top:814px">    <span class="br">}</span></div><div class="ln" style="top:862px">99</div><div class="cl" style="top:862px">    <b class="kw">public</b> <b class="kw">static</b> <span class="ty">String</span> post<span class="br">(</span><span class="ty">String</span> str<span class="br">)</span> <b class="kw">throws</b> <span class="ty">IOException</span> <span class="br">{</span></div><div class="ln" style="top:886px">101</div><div class="cl" style="top:886px">        FormBody.Builder add <span class="op">=</span> <b class="kw">new</b> FormBody.Builder<span class="br">(</span><span class="br">)</span>.add<span class="br">(</span><span class="st">&quot;account&quot;</span>, ACCOUNT<span class="br">)</span>;</div><div class="ln" style="top:910px">111</div><div class="cl" style="top:910px">        Response execute <span class="op">=</span> client.newCall<span class="br">(</span><b class="kw">new</b> Request.Builder<span class="br">(</span><span class="br">)</span>.url<span class="br">(</span>str<span class="br">)</span>.post<span class="br">(</span>add.add<span class="br">(</span><span class="st">&quot;password&quot;</span>, MD5Util.getMD5<span class="br">(</span>SALT <span class="op">+</span> PASSWORD<span class="br">)</span><span class="br">)</span>.build<span class="br">(</span><span class="br">)</span><span class="br">)</span>.build<span class="br">(</span><span class="br">)</span><span class="br">)</span>.execute<span class="br">(</span><span class="br">)</span>;</div><div class="ln" style="top:934px">112</div><div class="cl" style="top:934px">        <b class="kw">if</b> <span class="br">(</span>execute.isSuccessful<span class="br">(</span><span class="br">)</span><span class="br">)</span> <span class="br">{</span></div><div class="ln" style="top:958px">113</div><div class="cl" style="top:958px">            <b class="kw">return</b> execute.body<span class="br">(</span><span class="br">)</span>.string<span class="br">(</span><span class="br">)</span>;</div><div class="cl" style="top:982px">        <span class="br">}</span></div>
</div>
<div class="a" style="left:457px;top:363px;width:2px;height:23px;background:#ff0000"></div>
<div class="a" style="left:61px;top:352px;width:450px;height:33px;border:2px solid #ee1c25"></div>
<div class="a" style="left:1482px;top:0;width:10px;height:908px;background:#f4f4f4"></div>
<div class="a" style="left:1482px;top:0;width:10px;height:816px;background:#dcdcdc"></div>
<div class="a" style="left:0;top:898px;width:1482px;height:10px;background:#f4f4f4"></div>
<div class="a" style="left:31px;top:898px;width:1112px;height:10px;background:#dcdcdc"></div>
</div>
<div class="a" style="left:426px;top:1002px;width:1494px;height:1px;background:#c9c9c9"></div>
<div class="a" style="left:426px;top:1002px;width:48px;height:3px;background:#3b7fc4"></div>
<div class="ui" style="left:438px;top:1012px">代码</div>
<div class="ui" style="left:486px;top:1012px">Smali</div>
<div class="ui" style="left:541px;top:1012px">Simple</div>
<div class="ui" style="left:604px;top:1012px">Fallback</div>
<div class="a" style="left:716px;top:1011px;width:14px;height:14px;border:1px solid #a6a6a6;border-radius:2px;background:#fff"></div>
<div class="ui" style="left:734px;top:1011px">Split view</div>
<svg class="ic" style="left:953px;top:1035px" width="14" height="5" viewBox="0 0 14 5"><circle cx="2.4" cy="2.5" r="1.3" fill="#ababab"/><circle cx="7.4" cy="2.5" r="1.3" fill="#ababab"/><circle cx="12.4" cy="2.5" r="1.3" fill="#ababab"/></svg>
<div class="ui" style="left:5px;top:1014px">问题:</div>
<svg class="ic" style="left:361px;top:1015px" width="14" height="12" viewBox="0 0 14 12"><path d="M7 0 L14 12 H0 Z" fill="#f2a92f"/><rect x="6.3" y="3.5" width="1.5" height="4.5" fill="#fff"/><rect x="6.3" y="9" width="1.5" height="1.5" fill="#fff"/></svg>
<div class="ui" style="left:380px;top:1014px">2 警告</div>
</body></html>
